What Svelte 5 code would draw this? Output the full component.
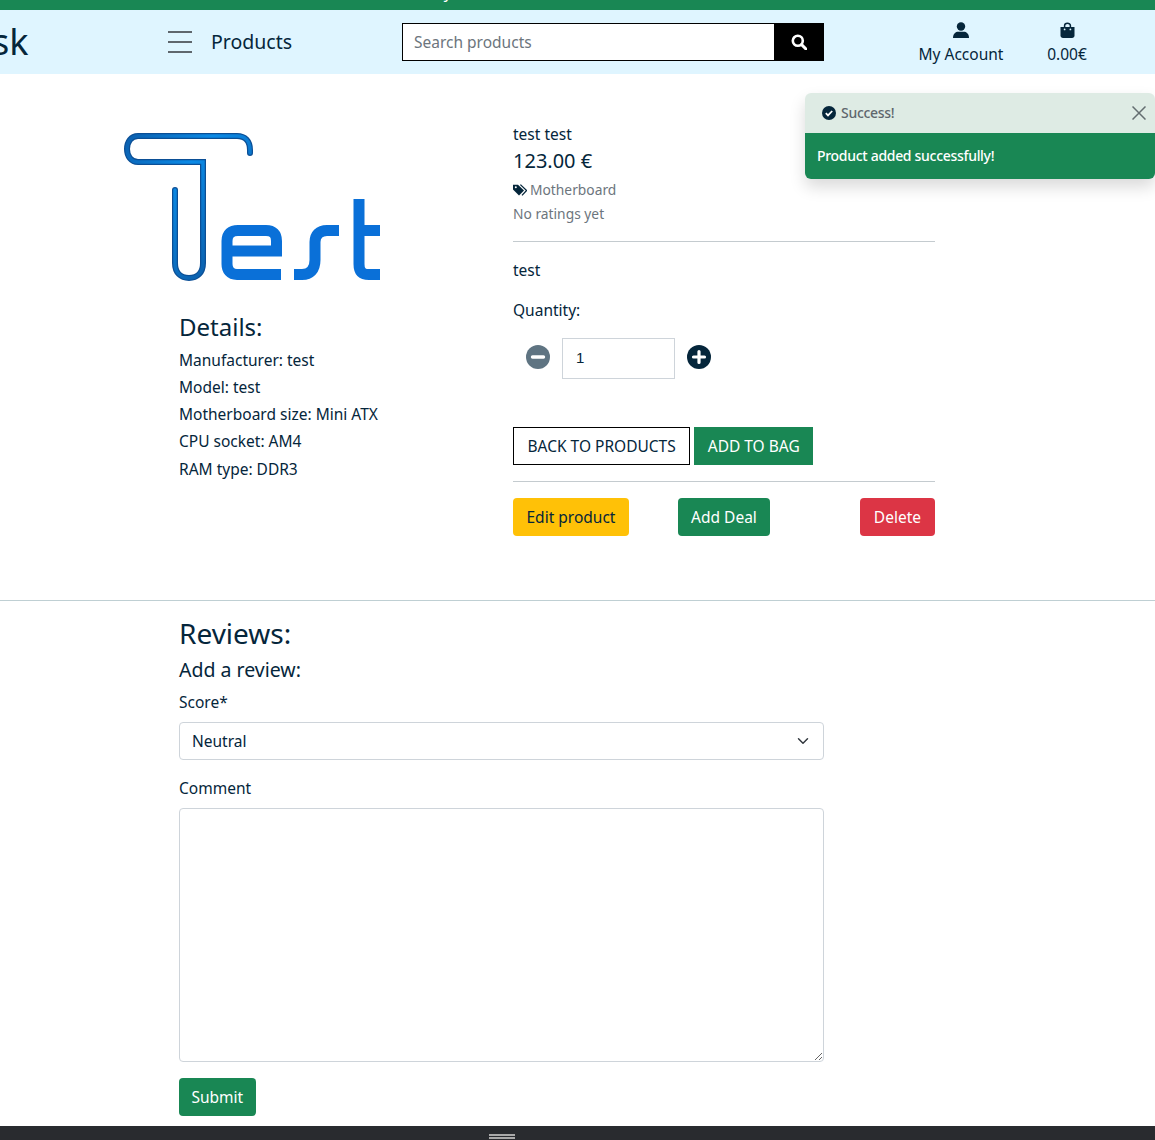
<script>
    let quantity = $state(1);
    let score = $state("Neutral");
    let comment = $state("");
    let showToast = $state(true);

    const details = [
        "Manufacturer: test",
        "Model: test",
        "Motherboard size: Mini ATX",
        "CPU socket: AM4",
        "RAM type: DDR3"
    ];
    const scores = ["Very bad", "Bad", "Neutral", "Good", "Very good"];
</script>

<div class="page">
    <div class="banner"><span>Free delivery on all orders over 100€ in the whole store now!</span></div>

    <nav class="navbar">
        <span class="brand">sk</span>
        <button class="burger" aria-label="Menu"><i></i><i></i><i></i></button>
        <span class="nav-title">Products</span>
        <form class="search" onsubmit={(e) => e.preventDefault()}>
            <input type="text" placeholder="Search products" />
            <button aria-label="Search">
                <svg width="16" height="16" viewBox="0 0 16 16">
                    <circle cx="6.8" cy="6.8" r="5" fill="none" stroke="#fff" stroke-width="2.6" />
                    <path d="M10.6 10.6 L15 15" stroke="#fff" stroke-width="3" stroke-linecap="round" />
                </svg>
            </button>
        </form>
        <div class="nav-item account">
            <svg width="16" height="17" viewBox="0 0 16 17">
                <circle cx="8" cy="4.5" r="4.2" fill="#05263b" />
                <path d="M0 16 C0 11.5 3 9.8 5 9.8 H11 C13 9.8 16 11.5 16 16 Z" fill="#05263b" />
            </svg>
            <span>My Account</span>
        </div>
        <div class="nav-item bag">
            <svg width="15" height="17" viewBox="0 0 15 17">
                <path d="M4.6 6 V3.6 C4.6 0.4 10.4 0.4 10.4 3.6 V6" fill="none" stroke="#05263b" stroke-width="1.5" />
                <path d="M0.5 5 H14.5 V13.5 C14.5 15 13.5 16 12 16 H3 C1.5 16 0.5 15 0.5 13.5 Z" fill="#05263b" />
                <circle cx="4.6" cy="7.4" r="0.9" fill="#dff5ff" />
                <circle cx="10.4" cy="7.4" r="0.9" fill="#dff5ff" />
            </svg>
            <span>0.00€</span>
        </div>
    </nav>

    {#if showToast}
        <div class="toast">
            <div class="toast-head">
                <svg width="14" height="14" viewBox="0 0 14 14">
                    <circle cx="7" cy="7" r="7" fill="#05263b" />
                    <path d="M3.8 7.2 L6 9.4 L10.2 5" fill="none" stroke="#fff" stroke-width="1.8" />
                </svg>
                <span>Success!</span>
                <button class="close" aria-label="Close" onclick={() => (showToast = false)}>
                    <svg width="14" height="14" viewBox="0 0 14 14">
                        <path d="M0.5 0.5 L13.5 13.5 M13.5 0.5 L0.5 13.5" stroke="#646d70" stroke-width="1.5" />
                    </svg>
                </button>
            </div>
            <div class="toast-body">Product added successfully!</div>
        </div>
    {/if}

    <section class="product">
        <div class="left">
            <svg class="logo" width="260" height="152" viewBox="122 131 260 152">
                <defs>
                    <linearGradient id="wire" x1="0" y1="0" x2="1" y2="1">
                        <stop offset="0" stop-color="#0b5fae" />
                        <stop offset="0.35" stop-color="#0b8ae6" />
                        <stop offset="1" stop-color="#0b4f96" />
                    </linearGradient>
                </defs>
                <path
                    d="M250 153 V150 C250 141 245 136 237 136 H138 C131 136 127 142 127 149 C127 156 131 162 138 162 H203 V263 C203 273 197 278 189 278 C181 278 175 273 175 263 V190"
                    fill="none" stroke="#0b4f96" stroke-width="6" stroke-linecap="round" />
                <path
                    d="M250 153 V150 C250 141 245 136 237 136 H138 C131 136 127 142 127 149 C127 156 131 162 138 162 H203 V263 C203 273 197 278 189 278 C181 278 175 273 175 263 V190"
                    fill="none" stroke="url(#wire)" stroke-width="3.5" stroke-linecap="round" />
                <g fill="none" stroke="#0a70d8" stroke-width="11">
                    <path d="M281 274.5 H237 C230 274.5 227 270 227 264 V241 C227 234 231 230.5 238 230.5 H266 C273 230.5 276.5 234 276.5 241 V251 H227" />
                    <path d="M339 230.5 H327 C319 230.5 315 235 315 242 V260 C315 270 310 274.5 302 274.5 H294" />
                    <path d="M359 199 V264 C359 271 362 274.5 369 274.5 H380 M359 230.5 H380" />
                </g>
            </svg>
            <div class="details">
                <h4>Details:</h4>
                {#each details as line}
                    <p>{line}</p>
                {/each}
            </div>
        </div>

        <div class="right">
            <p class="name">test test</p>
            <p class="price">123.00 €</p>
            <p class="muted category">
                <svg width="14" height="12" viewBox="0 0 14 12">
                    <path d="M0 0.8 H5 L11 6.5 L6 11.6 L0 5.6 Z" fill="#05263b" />
                    <path d="M7.4 0.6 L13.6 6.5 L9 11.4" fill="none" stroke="#05263b" stroke-width="1.3" />
                    <circle cx="2.8" cy="3.2" r="1" fill="#fff" />
                </svg>
                Motherboard
            </p>
            <p class="muted ratings">No ratings yet</p>
            <hr />
            <p class="description">test</p>
            <label class="qty-label" for="qty">Quantity:</label>
            <div class="qty">
                <button class="round minus" aria-label="Decrease" onclick={() => quantity > 1 && quantity--}>
                    <svg width="24" height="24" viewBox="0 0 24 24">
                        <circle cx="12" cy="12" r="12" fill="#5f7482" />
                        <path d="M6.5 12 H17.5" stroke="#fff" stroke-width="3.4" stroke-linecap="round" />
                    </svg>
                </button>
                <input id="qty" type="number" bind:value={quantity} />
                <button class="round" aria-label="Increase" onclick={() => quantity++}>
                    <svg width="24" height="24" viewBox="0 0 24 24">
                        <circle cx="12" cy="12" r="12" fill="#05263b" />
                        <path d="M6.5 12 H17.5 M12 6.5 V17.5" stroke="#fff" stroke-width="3.2" stroke-linecap="round" />
                    </svg>
                </button>
            </div>
            <div class="actions">
                <button class="btn outline">BACK TO PRODUCTS</button>
                <button class="btn green square">ADD TO BAG</button>
            </div>
            <hr class="after-actions" />
            <div class="admin">
                <button class="btn yellow">Edit product</button>
                <button class="btn green">Add Deal</button>
                <button class="btn red">Delete</button>
            </div>
        </div>
    </section>

    <section class="reviews">
        <h3>Reviews:</h3>
        <h5>Add a review:</h5>
        <form onsubmit={(e) => e.preventDefault()}>
            <label for="score">Score*</label>
            <select id="score" bind:value={score}>
                {#each scores as s}
                    <option>{s}</option>
                {/each}
            </select>
            <label for="comment">Comment</label>
            <textarea id="comment" bind:value={comment}></textarea>
            <button class="btn green submit">Submit</button>
        </form>
    </section>

    <footer class="footer">
        <div class="footer-burger"><i></i><i></i></div>
    </footer>
</div>

<style>
    :global(body) {
        background: #fff;
    }

    .page {
        position: relative;
        height: 1140px;
        overflow: hidden;
        font-family: "Noto Sans", sans-serif;
        font-size: 15.5px;
        line-height: 24px;
        color: #05263b;
    }

    p {
        margin: 0;
    }

    .banner {
        height: 10px;
        overflow: hidden;
        background: #198754;
        color: #fff;
        text-align: center;
    }

    .banner span {
        display: block;
        margin-top: -20px;
    }

    .navbar {
        height: 64px;
        display: flex;
        align-items: center;
        background: #dff5ff;
    }

    .brand {
        flex: none;
        width: 176px;
        margin-left: -8px;
        font-size: 36px;
    }

    .burger {
        width: 24px;
        height: 22px;
        padding: 0;
        border: 0;
        background: none;
        display: flex;
        flex-direction: column;
        justify-content: space-between;
    }

    .burger i {
        display: block;
        height: 2px;
        background: #5f676d;
    }

    .nav-title {
        margin-left: 19px;
        width: 191px;
        font-size: 19.5px;
    }

    .search {
        display: flex;
        width: 422px;
        height: 38px;
    }

    .search input {
        flex: 1;
        min-width: 0;
        border: 1px solid #000;
        padding: 0 11px;
        font: inherit;
        outline: none;
    }

    .search input::placeholder {
        color: #6c757d;
    }

    .search button {
        width: 49px;
        padding: 0 2px 0 0;
        border: 0;
        background: #000;
        display: flex;
        align-items: center;
        justify-content: center;
    }

    .nav-item {
        display: flex;
        flex-direction: column;
        align-items: center;
        gap: 3px;
        margin-top: 3px;
    }

    .account {
        width: 100px;
        margin-left: 87px;
    }

    .bag {
        width: 60px;
        margin-left: 26px;
    }

    .toast {
        position: absolute;
        top: 93px;
        right: 0;
        width: 350px;
        border-radius: 6px;
        overflow: hidden;
        box-shadow: 0 8px 16px rgba(0, 0, 0, 0.15);
        font-size: 14px;
        font-weight: 500;
        letter-spacing: -0.3px;
    }

    .toast-head {
        height: 40px;
        display: flex;
        align-items: center;
        gap: 5px;
        padding: 0 9px 0 17px;
        background: #deebe4;
        color: #5f676d;
    }

    .close {
        margin-left: auto;
        padding: 0;
        border: 0;
        background: none;
        display: flex;
    }

    .toast-body {
        height: 46px;
        display: flex;
        align-items: center;
        padding: 0 12px;
        background: #198754;
        color: #fff;
    }

    .product {
        height: 527px;
        box-sizing: border-box;
        display: flex;
        border-bottom: 1px solid #bfcfd3;
    }

    .left {
        width: 513px;
        flex: none;
    }

    .logo {
        display: block;
        margin: 57px 0 0 122px;
    }

    .details {
        margin: 29px 0 0 179px;
    }

    .details h4 {
        margin: 0 0 6.5px;
        font-size: 24px;
        font-weight: 400;
        line-height: 29px;
    }

    .details p {
        margin-bottom: 3.25px;
    }

    .right {
        width: 422px;
        padding-top: 48px;
    }

    .price {
        margin-top: 3px;
        font-size: 20px;
    }

    .muted {
        color: #6c757d;
        font-size: 13.8px;
    }

    .category {
        margin-top: 5px;
        display: flex;
        align-items: center;
        gap: 3px;
    }

    .category svg {
        flex: none;
    }

    hr {
        margin: 15px 0 0;
        border: 0;
        border-top: 1px solid #c4cbcf;
    }

    .description {
        margin-top: 16px;
    }

    .qty-label {
        display: block;
        margin-top: 16px;
    }

    .qty {
        display: flex;
        align-items: center;
        margin-top: 16px;
        padding-left: 13px;
    }

    .round {
        width: 24px;
        height: 24px;
        margin-bottom: 4px;
        padding: 0;
        border: 0;
        background: none;
        display: flex;
    }

    .minus {
        margin-right: 12px;
    }

    .qty input {
        width: 113px;
        height: 41px;
        box-sizing: border-box;
        margin-right: 12px;
        padding: 0 13px 2px;
        border: 1px solid #ced4da;
        font-family: "Liberation Sans", sans-serif;
        font-size: 15px;
        color: #05263b;
        outline: none;
        appearance: textfield;
    }

    .actions {
        display: flex;
        gap: 4px;
        margin-top: 48px;
    }

    .btn {
        height: 38px;
        box-sizing: border-box;
        padding: 0 12.5px;
        border: 1px solid transparent;
        border-radius: 4px;
        font: inherit;
        color: #fff;
    }

    .outline {
        padding: 0 13.5px;
        border: 1px solid #000;
        border-radius: 0;
        background: #fff;
        color: #05263b;
    }

    .green {
        background: #198754;
    }

    .square {
        border-radius: 0;
    }

    .yellow {
        background: #ffc107;
        color: #05263b;
    }

    .red {
        padding: 0 13px;
        background: #dc3545;
    }

    .after-actions {
        margin-top: 16px;
    }

    .admin {
        display: grid;
        grid-template-columns: 1fr auto 1fr;
        margin-top: 16px;
    }

    .admin .yellow {
        justify-self: start;
    }

    .admin .red {
        justify-self: end;
    }

    .reviews {
        margin-left: 179px;
        width: 645px;
        padding-top: 15px;
    }

    .reviews h3 {
        margin: 0 0 8px;
        font-size: 28px;
        font-weight: 400;
        line-height: 34px;
    }

    .reviews h5 {
        margin: 0 0 8px;
        font-size: 19.5px;
        font-weight: 400;
        line-height: 24px;
    }

    label {
        display: block;
    }

    .reviews label {
        margin-bottom: 8px;
    }

    select {
        display: block;
        width: 100%;
        height: 38px;
        margin-bottom: 16px;
        padding: 0 12px;
        border: 1px solid #ced4da;
        border-radius: 4px;
        background: #fff url("data:image/svg+xml,%3csvg xmlns='http://www.w3.org/2000/svg' viewBox='0 0 16 16'%3e%3cpath fill='none' stroke='%23343a40' stroke-linecap='round' stroke-linejoin='round' stroke-width='2' d='m2 5 6 6 6-6'/%3e%3c/svg%3e") no-repeat right 13px center / 14px 12px;
        font: inherit;
        color: #05263b;
        appearance: none;
    }

    textarea {
        display: block;
        box-sizing: border-box;
        width: 100%;
        height: 254px;
        margin-bottom: 16px;
        border: 1px solid #ced4da;
        border-radius: 4px;
    }

    .submit {
        display: block;
        padding: 0 11.5px;
    }

    .footer {
        position: absolute;
        left: 0;
        right: 0;
        bottom: 0;
        height: 14px;
        background: #292b2f;
    }

    .footer-burger {
        width: 26px;
        margin: 8px 0 0 489px;
    }

    .footer-burger i {
        display: block;
        height: 2px;
        margin-bottom: 1px;
        background: #a9a9a9;
    }
</style>
